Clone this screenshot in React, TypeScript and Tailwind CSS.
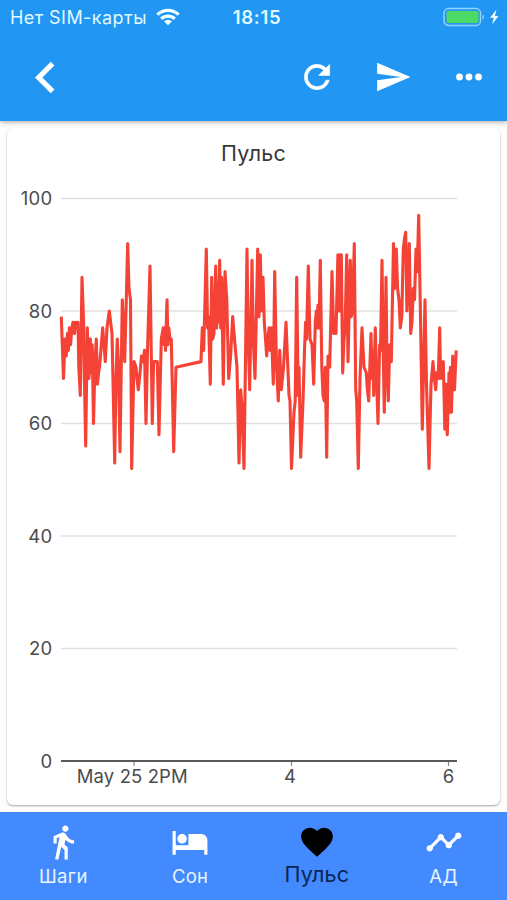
import type { IconType } from 'react-icons';
import {
  MdChevronLeft,
  MdDirectionsWalk,
  MdFavorite,
  MdLocalHotel,
  MdSend,
  MdTimeline,
} from 'react-icons/md';

// [horizontal position, beats per minute]
const pulse: [number, number][] = [
  [61.3, 79], [63.5, 68], [65, 75], [66.3, 72], [67.4, 76], [68.4, 73], [69.4, 77], [70.6, 74],
  [71.8, 77], [73, 78], [74.5, 76], [75.5, 78], [77, 77], [78, 78], [78.8, 70], [80.3, 65],
  [82, 86], [83.6, 78], [84.4, 68], [85.7, 56], [87.3, 77], [89, 68], [90.3, 75], [91.2, 69],
  [92.2, 74], [93.5, 60], [95, 71], [96.3, 75], [97.5, 67], [98.5, 69], [99.5, 70], [102.7, 77],
  [104, 74], [105.3, 71], [107, 77], [109.3, 80], [112, 76], [113.2, 66], [114.7, 53],
  [116, 68], [117.3, 75], [118.5, 70], [120, 55], [122.3, 82], [124.7, 71], [127.7, 92],
  [129, 84], [130.5, 82], [131.7, 52], [134, 71], [136, 70], [137, 68], [138.3, 66], [140, 69],
  [141.5, 72], [143, 71], [144.5, 73], [146, 60], [147.5, 73], [150, 88], [152.3, 60], [153.6, 71],
  [157.3, 71], [159, 58], [161.3, 75], [163.3, 77], [164.1, 74], [164.7, 77], [165.5, 73],
  [167, 82], [168, 74], [168.8, 77], [170, 75], [171.3, 75], [173.7, 55], [176, 70], [201, 71],
  [202.3, 77], [203.7, 73], [206.3, 91], [207.6, 77], [208.5, 79], [210.3, 67], [211.7, 86],
  [212.6, 75], [214, 76], [215.7, 88], [216.7, 77], [217.5, 85], [218.4, 78], [219.7, 89],
  [220.7, 77], [221.6, 86], [223.3, 67], [225, 87], [226.8, 82], [228.7, 68], [230.6, 72],
  [232.7, 79], [234.5, 75], [237, 70], [239, 53], [240.7, 66], [242, 63], [244, 52], [247, 91],
  [248.2, 75], [249.7, 66], [252, 89], [253.3, 75], [255, 68], [257.7, 91], [259, 79],
  [260.3, 90], [261.5, 80], [263, 86], [264.3, 78], [266.7, 72], [267.8, 75], [269.1, 77],
  [270.1, 73], [271.3, 77], [273.3, 67], [274.7, 87], [276.5, 70], [278.3, 64], [279.7, 73],
  [281.3, 66], [283.5, 70], [286, 78], [287.6, 71], [289, 65], [290, 64], [291.5, 52],
  [294, 62], [295.2, 64], [296.7, 86], [298.2, 65], [299, 70], [300.7, 54], [303, 64],
  [304.5, 73], [305.6, 78], [306.5, 75], [308.3, 88], [310, 75], [312, 74], [313.7, 67],
  [315.3, 78], [316.4, 80], [317, 77], [317.9, 81], [319, 77], [320.3, 89], [321.8, 70],
  [323, 65], [324.3, 64], [325.3, 70], [326.7, 54], [328, 72], [329.7, 70], [332, 87],
  [333.7, 76], [334.8, 78], [336, 76], [337.9, 90], [338.8, 80], [339.7, 90], [340.3, 80],
  [341.3, 90], [342.7, 69], [344, 75], [345.1, 77], [346.7, 90], [348, 71], [349, 79],
  [350.3, 89], [351.2, 79], [352.5, 80], [354.3, 92], [355.7, 66], [356.7, 64], [358.3, 52],
  [360, 68], [362, 77], [364, 70], [366.3, 69], [367.4, 66], [368.7, 64], [371, 76],
  [372.2, 68], [372.9, 73], [373.7, 65], [375.3, 77], [376.4, 69], [378, 60], [379.6, 74],
  [380.5, 73], [382, 89], [383, 75], [384.3, 62], [386, 86], [387, 70], [388.3, 64],
  [389.7, 74], [391.3, 71], [393.5, 92], [394.7, 84], [396.3, 91], [397.6, 84], [399, 82],
  [400.3, 77], [401.8, 79], [403.3, 91], [404.6, 93], [405.7, 94], [406.9, 80], [409.3, 92],
  [410.7, 76], [412, 78], [413.3, 84], [414.5, 82], [416, 91], [417.2, 87], [418.7, 97],
  [420.5, 79], [422.3, 59], [425, 82], [426.5, 67], [429, 52], [431, 67], [433, 71],
  [434.3, 68], [435.7, 66], [436.7, 69], [438.2, 68], [439.7, 77], [440.6, 68], [441.7, 70],
  [443.3, 71], [444.8, 59], [446, 67], [447.3, 58], [449, 69], [449.6, 62], [450.4, 70],
  [451.5, 62], [452.7, 72], [453.6, 67], [454.5, 66], [456.2, 73],
];

const yAt = (value: number) => 761 - value * 5.625;

const points = pulse.map(([x, value]) => `${x},${yAt(value) - 128}`).join(' ');

const yTicks = [0, 20, 40, 60, 80, 100];

const xTicks = [
  { x: 134, labelX: 132.3, label: 'May 25 2PM' },
  { x: 291.5, labelX: 290, label: '4' },
  { x: 448.5, labelX: 448.5, label: '6' },
];

function StatusBar() {
  return (
    <div className="relative flex h-[34px] items-center justify-between pr-1.5 pl-[10px] text-[18px] text-[#e0faff]">
      <div className="flex items-center gap-[9px]">
        <span className="tracking-[0.45px]">Нет SIM-карты</span>
        <svg width="24" height="18" viewBox="0 0 24 18" fill="none" stroke="#f0ffff" strokeWidth="3.3">
          <path d="M1.4 6.6a15.4 15.4 0 0 1 21.2 0" />
          <path d="M5.2 10.9a9.8 9.8 0 0 1 13.6 0" />
          <path d="M12 17.2l-3.9-3.8a5.6 5.6 0 0 1 7.8 0z" fill="#f0ffff" stroke="none" />
        </svg>
      </div>
      <span className="absolute top-1 left-1/2 ml-[3.5px] -translate-x-1/2 text-[18.5px] leading-[27px] font-semibold tracking-[0.7px]">
        18:15
      </span>
      <svg width="58" height="20" viewBox="0 0 58 20">
        <rect x="1" y="1.6" width="36.5" height="16.8" rx="4.5" fill="none" stroke="#8fd4fb" strokeWidth="1.5" />
        <rect x="3.5" y="4" width="32" height="12" rx="2" fill="#4cd964" />
        <path d="M39.5 7.5c2 .8 2 4.2 0 5z" fill="#8fd4fb" />
        <path d="M53.5 2.5l-6.5 8.3h3.7l-1.5 6.4 6.3-8.3h-3.6z" fill="#f0ffff" />
      </svg>
    </div>
  );
}

function RefreshIcon() {
  return (
    <svg width="38" height="38" viewBox="0 0 24 24" fill="currentColor" stroke="currentColor" strokeWidth="0.35">
      <path d="M17.65 6.35A7.958 7.958 0 0 0 12 4c-4.42 0-7.99 3.58-7.99 8s3.57 8 7.99 8c3.73 0 6.84-2.55 7.73-6h-2.08A5.99 5.99 0 0 1 12 18c-3.31 0-6-2.69-6-6s2.69-6 6-6c1.66 0 3.14.69 4.22 1.78L13 11h7V4l-2.35 2.35z" />
    </svg>
  );
}

function MoreIcon() {
  return (
    <svg width="38" height="38" viewBox="0 0 24 24" fill="currentColor">
      <circle cx="6" cy="12" r="2.15" />
      <circle cx="12" cy="12" r="2.15" />
      <circle cx="18" cy="12" r="2.15" />
    </svg>
  );
}

function Header() {
  return (
    <header className="relative h-[121px] shrink-0 bg-[#2196f3] text-white shadow-[0_1px_5px_rgba(0,0,0,0.35)]">
      <StatusBar />
      <div className="flex h-[86px] items-center justify-between pr-[19px] pl-[14px]">
        <MdChevronLeft size={63} />
        <div className="flex gap-[38px]">
          <RefreshIcon />
          <MdSend size={38} />
          <MoreIcon />
        </div>
      </div>
    </header>
  );
}

function PulseChart() {
  return (
    <svg className="block" width="493" height="677" viewBox="7 0 493 677">
      <text x="253.5" y="33" textAnchor="middle" fontSize="21.5" letterSpacing="0.25" fill="#383838">
        Пульс
      </text>

      {yTicks.map((tick) => (
        <g key={tick}>
          {tick > 0 && (
            <line x1="61" x2="457" y1={yAt(tick) - 128} y2={yAt(tick) - 128} stroke="#e0e0e0" strokeWidth="1.7" />
          )}
          <text x="52.5" y={yAt(tick) - 121.5} textAnchor="end" fontSize="18.5" letterSpacing="0.3" fill="#4c4c4c">
            {tick}
          </text>
        </g>
      ))}

      <polyline
        points={points}
        fill="none"
        stroke="#f44336"
        strokeWidth="3.1"
        strokeLinejoin="round"
      />

      <line x1="61" x2="457" y1="633" y2="633" stroke="#555b57" strokeWidth="2" />
      {xTicks.map(({ x, labelX, label }) => (
        <g key={label}>
          <line x1={x} x2={x} y1="634" y2="638" stroke="#888" strokeWidth="1.2" />
          <text x={labelX} y="655" textAnchor="middle" fontSize="18.5" letterSpacing="0.1" fill="#4c4c4c">
            {label}
          </text>
        </g>
      ))}
    </svg>
  );
}

interface TabProps {
  icon: IconType;
  label: string;
  active?: boolean;
}

function Tab({ icon: Icon, label, active = false }: TabProps) {
  return (
    <button className={`flex flex-1 flex-col items-center pt-[11px] ${active ? 'text-black' : 'text-white'}`}>
      <Icon size={38} />
      <span
        className={
          active
            ? 'mt-[1px] text-[21.5px] leading-6 tracking-[0.2px] text-[#082654]'
            : 'mt-[3px] text-[18.5px] leading-6 tracking-[0.3px] text-[#e8f6ff]'
        }
      >
        {label}
      </span>
    </button>
  );
}

export default function App() {
  return (
    <div className="flex h-[900px] w-[507px] flex-col overflow-hidden bg-[#fdfdfc] font-['Inter','Liberation_Sans',sans-serif]">
      <Header />
      <main className="flex-1 px-[7px] pt-[7px]">
        <div className="h-[677px] overflow-hidden rounded-md bg-white shadow-[0_1px_2px_rgba(0,0,0,0.35)]">
          <PulseChart />
        </div>
      </main>
      <nav className="flex h-[88px] shrink-0 bg-[#448aff]">
        <Tab icon={MdDirectionsWalk} label="Шаги" />
        <Tab icon={MdLocalHotel} label="Сон" />
        <Tab icon={MdFavorite} label="Пульс" active />
        <Tab icon={MdTimeline} label="АД" />
      </nav>
    </div>
  );
}
